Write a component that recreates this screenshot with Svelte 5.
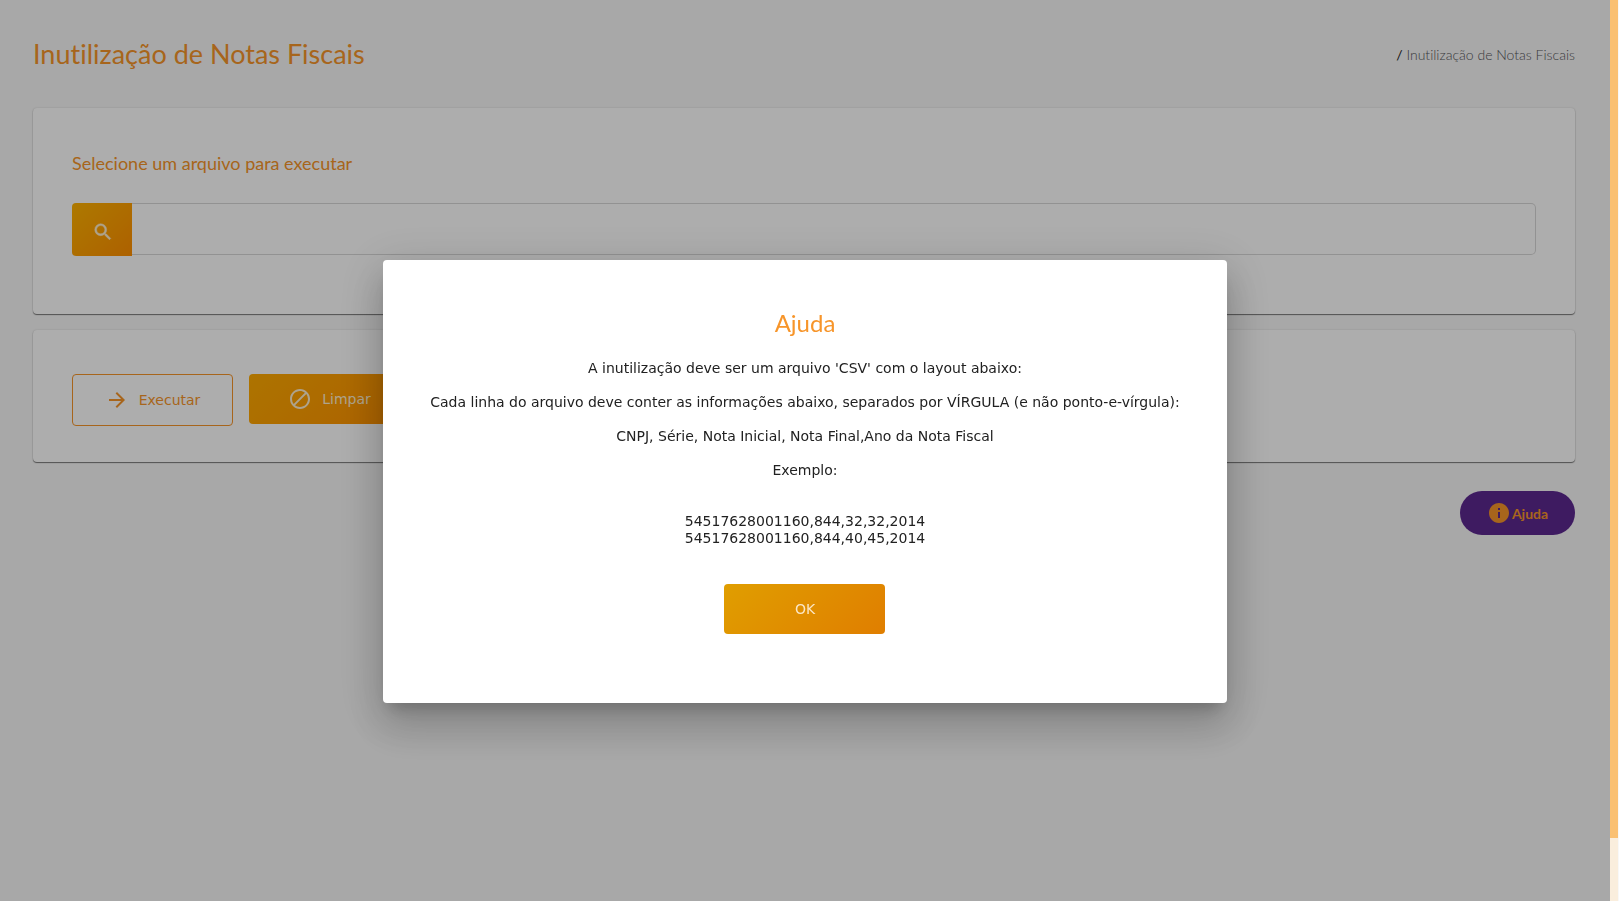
<script lang="ts">
  const title = 'Inutilização de Notas Fiscais';

  const instructions = [
    "A inutilização deve ser um arquivo 'CSV' com o layout abaixo:",
    'Cada linha do arquivo deve conter as informações abaixo, separados por VÍRGULA (e não ponto-e-vírgula):',
    'CNPJ, Série, Nota Inicial, Nota Final,Ano da Nota Fiscal',
    'Exemplo:'
  ];

  const examples = ['54517628001160,844,32,32,2014', '54517628001160,844,40,45,2014'];

  let fileName = $state('');
  let helpOpen = $state(true);
</script>

<div class="shell">
  <main class="page">
    <header class="page-header">
      <h1>{title}</h1>
      <nav class="breadcrumb" aria-label="Navegação"><span class="slash">/</span> {title}</nav>
    </header>

    <section class="card file-card">
      <h2><label for="file-name">Selecione um arquivo para executar</label></h2>
      <div class="file-group">
        <button class="search" aria-label="Procurar arquivo">
          <svg viewBox="0 0 24 24" width="22" height="22" fill="currentColor" stroke="currentColor" stroke-width="0.5">
            <path d="M15.5 14h-.79l-.28-.27A6.471 6.471 0 0 0 16 9.5 6.5 6.5 0 1 0 9.5 16c1.61 0 3.09-.59 4.23-1.57l.27.28v.79l5 4.99L20.49 19l-4.99-5zm-6 0C7.01 14 5 11.99 5 9.5S7.01 5 9.5 5 14 7.01 14 9.5 11.99 14 9.5 14z" />
          </svg>
        </button>
        <input id="file-name" type="text" bind:value={fileName} />
      </div>
    </section>

    <section class="card actions">
      <button class="btn outlined">
        <svg viewBox="0 0 24 24" width="24" height="24" fill="currentColor">
          <path d="M12 4l-1.41 1.41L16.17 11H4v2h12.17l-5.58 5.59L12 20l8-8z" />
        </svg>
        Executar
      </button>
      <button class="btn filled" onclick={() => (fileName = '')}>
        <svg viewBox="0 0 24 24" width="24" height="24" fill="currentColor">
          <path d="M12 2C6.48 2 2 6.48 2 12s4.48 10 10 10 10-4.48 10-10S17.52 2 12 2zM4 12c0-4.42 3.58-8 8-8 1.85 0 3.55.63 4.9 1.69L5.69 16.9A7.902 7.902 0 0 1 4 12zm8 8c-1.85 0-3.55-.63-4.9-1.69L18.31 7.1A7.902 7.902 0 0 1 20 12c0 4.42-3.58 8-8 8z" />
        </svg>
        Limpar
      </button>
    </section>

    <button class="help" onclick={() => (helpOpen = true)}>
      <svg viewBox="0 0 24 24" width="24" height="24" fill="currentColor">
        <path d="M12 2C6.48 2 2 6.48 2 12s4.48 10 10 10 10-4.48 10-10S17.52 2 12 2zm1 15h-2v-6h2v6zm0-8h-2V7h2v2z" />
      </svg>
      Ajuda
    </button>
  </main>

  {#if helpOpen}
    <div class="overlay">
      <div class="dialog" role="dialog" aria-modal="true" aria-labelledby="help-title">
        <h2 id="help-title">Ajuda</h2>
        {#each instructions as line}
          <p>{line}</p>
        {/each}
        <p class="examples">
          {#each examples as example}
            <span>{example}</span>
          {/each}
        </p>
        <button class="btn ok" onclick={() => (helpOpen = false)}>OK</button>
      </div>
    </div>
  {/if}

  <div class="scroll-track" aria-hidden="true"><div class="scroll-thumb"></div></div>
</div>

<style>
  :global(body) {
    background: #f8f8f8;
  }

  .shell {
    --orange: #f7952a;
    --display: 'Lato', sans-serif;
    --text: 'DejaVu Sans', Verdana, sans-serif;
    min-height: 100vh;
    padding-right: 9px;
    box-sizing: border-box;
    font-family: var(--text);
    font-size: 14px;
    font-variant-ligatures: none;
    color: #212121;
  }

  button,
  input {
    font: inherit;
    box-sizing: border-box;
  }

  button {
    border: 0;
    padding: 0;
    cursor: pointer;
  }

  h1,
  h2 {
    margin: 0;
    font-family: var(--display);
    font-weight: 400;
    color: var(--orange);
  }

  .page {
    padding: 32px 35px 32px 33px;
    display: flex;
    flex-direction: column;
    gap: 16px;
  }

  .page-header {
    display: flex;
    align-items: center;
    justify-content: space-between;
    height: 44px;
    margin-bottom: 16px;
  }

  h1 {
    font-size: 27px;
    line-height: 44px;
  }

  .breadcrumb {
    font-family: var(--display);
    font-size: 14px;
    font-weight: 300;
    color: #55555a;
  }

  .slash {
    font-weight: 400;
    color: #212121;
  }

  .card {
    background: #fff;
    border-radius: 4px;
    box-shadow: 0 1px 1px rgba(0, 0, 0, 0.5), 0 0 2px rgba(0, 0, 0, 0.15);
  }

  .file-card {
    padding: 39px 39px 58px;
  }

  .file-card h2 {
    font-size: 18px;
    line-height: 32px;
    margin-bottom: 24px;
  }

  .file-group {
    display: flex;
    align-items: flex-start;
  }

  .search {
    width: 60px;
    height: 53px;
    border-radius: 4px 0 0 4px;
    display: grid;
    place-items: center;
    background: linear-gradient(135deg, #ffb300, #ff8f00);
    color: #fff0d0;
    padding: 4px 0 0 2px;
  }

  .file-group input {
    flex: 1;
    height: 52px;
    padding: 0 12px;
    border: 1px solid #d8d8d8;
    border-left: 0;
    border-radius: 0 5px 5px 0;
    background: transparent;
    outline: 0;
  }

  .actions {
    display: flex;
    align-items: flex-start;
    gap: 16px;
    padding: 44px 39px 36px;
  }

  .btn {
    min-width: 161px;
    height: 50px;
    border-radius: 4px;
    display: inline-flex;
    align-items: center;
    justify-content: center;
    gap: 10px;
  }

  .outlined {
    height: 52px;
    border: 1px solid var(--orange);
    background: transparent;
    color: var(--orange);
  }

  .filled {
    background: linear-gradient(135deg, #ffab00, #ff8f00);
    color: #fff0d0;
  }

  .help {
    align-self: flex-end;
    min-width: 115px;
    height: 44px;
    margin-top: 13px;
    border-radius: 22px;
    display: flex;
    align-items: center;
    justify-content: center;
    gap: 1px;
    background: #5c2890;
    color: var(--orange);
    font-family: var(--display);
    font-size: 14px;
    font-weight: 700;
  }

  .overlay {
    position: fixed;
    inset: 0 9px 0 0;
    padding-top: 62px;
    display: flex;
    align-items: center;
    justify-content: center;
    background: rgba(0, 0, 0, 0.32);
  }

  .dialog {
    background: #fff;
    border-radius: 4px;
    padding: 43px 47px 69px;
    text-align: center;
    box-shadow: 0 11px 15px -7px rgba(0, 0, 0, 0.2), 0 24px 38px 3px rgba(0, 0, 0, 0.14),
      0 9px 46px 8px rgba(0, 0, 0, 0.12);
  }

  .dialog h2 {
    font-size: 24px;
    line-height: 40px;
    margin-bottom: 17px;
  }

  .dialog p {
    margin: 0 0 17px;
    line-height: 17px;
  }

  .dialog .examples {
    margin: 34px 0 37px;
  }

  .examples span {
    display: block;
  }

  .ok {
    background: linear-gradient(135deg, #e09e00, #e07e00);
    color: #fbe6c4;
  }

  .scroll-track {
    position: fixed;
    inset: 0 1px 0 auto;
    width: 8px;
    background: #faeedd;
  }

  .scroll-thumb {
    height: 93%;
    background: #fac072;
  }
</style>
